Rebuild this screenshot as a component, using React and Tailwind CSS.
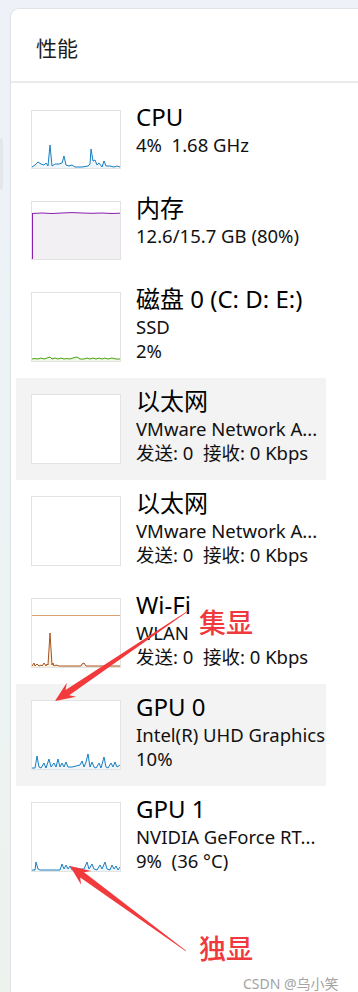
import React from "react";

const FONT = { fontFamily: '"Noto Sans", "Noto Sans CJK SC", sans-serif' };

function Graph({ tall, children }) {
  const h = tall ? 68 : 57;
  return (
    <div className={"shrink-0 w-[90px] border border-[#e3e3e3] bg-white " + (tall ? "h-[70px]" : "h-[59px]")}>
      <svg width="88" height={h} viewBox={`0 0 88 ${h}`} className="block">
        {children}
      </svg>
    </div>
  );
}

function Spark({ pts, h, stroke, fill }) {
  return (
    <>
      <polygon points={`${pts} 88,${h} 0,${h}`} fill={fill} />
      <polyline points={pts} fill="none" stroke={stroke} strokeWidth="1" strokeLinejoin="round" />
    </>
  );
}

const cpuPts = "0,56 3,54 6,51 9,53 12,54 14,52 16,55 18,34 20,55 23,53 27,53 30,52 32,45 34,54 37,55 40,54 43,56 50,56 56,55 58,53 59,38 61,50 63,49 65,54 67,52 70,56 72,50 74,55 78,55 82,56 85,55 88,56";
const memPts = "0,11.5 10,11 20,11.5 30,11 40,10.6 50,11 60,11.3 70,11 80,11.5 88,11.2";
const diskPts = "0,66 3,65.5 6,66 9,65 12,66 15,65 18,64 20,66 23,65 26,66 29,65 32,66 35,65.5 38,66 41,65 45,64 48,66 52,66 55,65 58,66 61,65 64,66 67,65 70,66 73,65 76,66 80,65 84,66 88,66";
const wifiPts = "0,67 2,64 3,67 5,65 7,67 9,66 10,67 12,64 14,67 15,65 16,66 18,34 20,66 21,64 22,67 24,66 27,67 49,67 50,65 52,64 54,67 88,67";
const gpu0Pts = "0,67 3,67 5,55 7,66 9,67 12,62 14,67 17,58 19,66 22,62 24,66 26,58 28,66 30,62 32,66 34,61 36,66 40,66 44,65 48,64 50,60 52,66 54,61 56,53 58,66 60,61 62,66 64,67 67,62 69,67 72,56 74,66 76,67 79,62 81,66 83,61 85,66 88,64";
const gpu1Pts = "0,67 3,67 4,59 6,66 8,67 10,67 20,67 28,67 30,61 32,66 34,62 36,66 38,63 40,67 44,65 48,66 52,66 55,59 57,66 60,61 62,66 65,67 68,62 70,66 73,59 75,66 78,67 80,62 82,66 84,63 86,67 88,64";

function Row({ tall, active, graph, title, lines }) {
  return (
    <div className={"ml-[5px] w-[310px] flex items-start gap-[15px] pl-[15px] py-[16px] " + (tall ? "h-[102px] " : "h-[91px] ") + (active ? "bg-[#f3f3f3]" : "")}>
      <Graph tall={tall}>{graph}</Graph>
      <div className="-mt-[9px] min-w-0 flex-1 overflow-hidden whitespace-pre">
        <div className="text-[24px] leading-[32px] text-black">{title}</div>
        {lines.map((l, i) => (
          <div key={i} className="text-[18.5px] leading-[24px] text-[#111111]">{l}</div>
        ))}
      </div>
    </div>
  );
}

function arrowPoints(tx, ty, px, py) {
  const dx = px - tx, dy = py - ty;
  const L = Math.hypot(dx, dy);
  const ux = dx / L, uy = dy / L;
  const nx = -uy, ny = ux;
  const h = 20, w = 8.5, s = 3.2;
  const wx = px - ux * h, wy = py - uy * h;
  const jx = px - ux * (h - 5), jy = py - uy * (h - 5);
  const p = [
    [tx + nx * 0.4, ty + ny * 0.4],
    [jx + nx * s, jy + ny * s],
    [wx + nx * w, wy + ny * w],
    [px, py],
    [wx - nx * w, wy - ny * w],
    [jx - nx * s, jy - ny * s],
    [tx - nx * 0.4, ty - ny * 0.4],
  ];
  return p.map((q) => q[0].toFixed(1) + "," + q[1].toFixed(1)).join(" ");
}

export default function App() {
  return (
    <div className="relative w-[358px] h-[992px] overflow-hidden bg-[linear-gradient(160deg,#eef1f8_0%,#ecf3f4_45%,#eef2ec_100%)]" style={FONT}>
      <div className="flex h-full">
        <div className="w-[10px] shrink-0 pt-[138px]">
          <div className="w-[3px] h-[52px] rounded-r-[3px] bg-[#e3e7ec]" />
        </div>
        <div className="flex-1 mt-[8px] border-l border-t border-[#dde3e6] rounded-tl-[9px] bg-white">
          <div className="h-[74px] border-b-2 border-[#ebebeb] pl-[25px] flex items-center">
            <span className="text-[21px] leading-[28px] text-[#1c1c1c] mt-[5px]">性能</span>
          </div>
          <div className="pt-[11px]">
            <Row
              title="CPU"
              lines={["4%  1.68 GHz"]}
              graph={<Spark pts={cpuPts} h={57} stroke="#1a7fc1" fill="#eef5fb" />}
            />
            <Row
              title="内存"
              lines={["12.6/15.7 GB (80%)"]}
              graph={
                <>
                  <Spark pts={memPts} h={57} stroke="#8b1fae" fill="#f2f0f3" />
                  <line x1="0.5" y1="11" x2="0.5" y2="57" stroke="#8b1fae" strokeWidth="1" />
                </>
              }
            />
            <Row
              tall
              title="磁盘 0 (C: D: E:)"
              lines={["SSD", "2%"]}
              graph={<Spark pts={diskPts} h={68} stroke="#4ba20f" fill="#eef7e6" />}
            />
            <Row tall active title="以太网" lines={["VMware Network A...", "发送: 0  接收: 0 Kbps"]} graph={null} />
            <Row tall title="以太网" lines={["VMware Network A...", "发送: 0  接收: 0 Kbps"]} graph={null} />
            <Row
              tall
              title="Wi-Fi"
              lines={["WLAN", "发送: 0  接收: 0 Kbps"]}
              graph={
                <>
                  <line x1="0" y1="16.5" x2="88" y2="16.5" stroke="#d6a274" strokeWidth="1" />
                  <Spark pts={wifiPts} h={68} stroke="#a5541b" fill="#fcefe3" />
                </>
              }
            />
            <Row
              tall
              active
              title="GPU 0"
              lines={["Intel(R) UHD Graphics", "10%"]}
              graph={<Spark pts={gpu0Pts} h={68} stroke="#1a7fc1" fill="#eef5fb" />}
            />
            <Row
              tall
              title="GPU 1"
              lines={["NVIDIA GeForce RT...", "9%  (36 °C)"]}
              graph={<Spark pts={gpu1Pts} h={68} stroke="#1a7fc1" fill="#eef5fb" />}
            />
          </div>
        </div>
      </div>

      <svg className="absolute inset-0 pointer-events-none" width="358" height="992" viewBox="0 0 358 992">
        <polygon points={arrowPoints(188, 611, 55, 701)} fill="#f23a3c" />
        <polygon points={arrowPoints(186, 951, 70, 866)} fill="#f23a3c" />
      </svg>
      <div className="absolute left-[199px] top-[605px] text-[27px] leading-[34px] font-medium text-[#f0393d]" style={{ fontFamily: '"Noto Sans CJK SC", sans-serif' }}>集显</div>
      <div className="absolute left-[199px] top-[931px] text-[27px] leading-[34px] font-medium text-[#f0393d]" style={{ fontFamily: '"Noto Sans CJK SC", sans-serif' }}>独显</div>
      <div className="absolute left-[243px] top-[974px] text-[14px] leading-[20px] text-[#a3a3a3]">CSDN @乌小笑</div>
    </div>
  );
}
